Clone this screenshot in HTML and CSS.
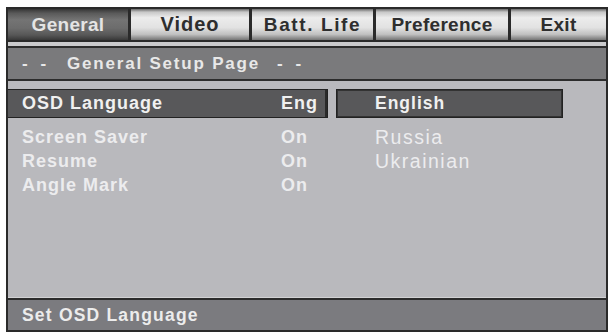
FILE: index.html
```html
<!DOCTYPE html>
<html>
<head>
<meta charset="utf-8">
<link rel="stylesheet" href="styles.css">
</head>
<body>
<div class="osd">
  <div class="tabs">
    <div class="tab tab-sel w-general">General</div>
    <div class="tab w-video">Video</div>
    <div class="tab w-batt">Batt. Life</div>
    <div class="tab w-pref">Preference</div>
    <div class="tab w-exit">Exit</div>
  </div>
  <div class="strip"></div>
  <div class="header"><span class="dash">- -</span><span class="title">General Setup Page</span><span class="dash">- -</span></div>
  <div class="main">
    <div class="col-left">
      <div class="row row-sel"><span class="label">OSD Language</span><span class="val">Eng</span></div>
      <div class="row row-first"><span class="label">Screen Saver</span><span class="val">On</span></div>
      <div class="row"><span class="label">Resume</span><span class="val">On</span></div>
      <div class="row"><span class="label">Angle Mark</span><span class="val">On</span></div>
    </div>
    <div class="col-right">
      <div class="opt opt-sel">English</div>
      <div class="opt opt-first">Russia</div>
      <div class="opt">Ukrainian</div>
    </div>
  </div>
  <div class="footer">Set OSD Language</div>
</div>
</body>
</html>
```

FILE: styles.css
```css
html, body {
  margin: 0;
  padding: 0;
  background: #ffffff;
}
body {
  font-family: "Liberation Sans", Arial, sans-serif;
  font-weight: bold;
}
.osd {
  margin: 7px 0 0 6px;
  width: 602px;
  height: 325px;
  box-sizing: border-box;
  border: 2px solid #2a2a2a;
  background: #b9b9bd;
  display: flex;
  flex-direction: column;
}
.tabs {
  display: flex;
  gap: 3px;
  height: 31px;
  background: #2a2a2a;
  padding-bottom: 2px;
  flex: none;
}
.tab {
  height: 31px;
  display: flex;
  align-items: center;
  justify-content: center;
  font-size: 19px;
  color: #2e2e2e;
  background: linear-gradient(to bottom, #6a6a6a 0, #c8c8c8 10%, #ececec 28%, #e2e2e2 60%, #c0c0c0 82%, #747474 100%);
  letter-spacing: 0.3px;
}
.tab-sel {
  color: #e4e4e4;
  background: linear-gradient(to bottom, #363636 0, #5a5a5a 14%, #747474 35%, #6c6c6c 62%, #575757 84%, #383838 100%);
}
.w-general { width: 120px; }
.w-video { width: 118px; font-size: 20px; letter-spacing: 1px; }
.w-batt { width: 121px; letter-spacing: 1.6px; }
.w-pref { width: 132px; }
.w-exit { width: 95px; }
.strip {
  height: 4px;
  background: #cbcbcd;
  flex: none;
}
.header {
  flex: none;
  height: 31px;
  border-top: 2px solid #2c2c2c;
  border-bottom: 2px solid #2c2c2c;
  background: #7a7a7c;
  color: #e8e8e8;
  font-size: 17px;
  letter-spacing: 1.8px;
  display: flex;
  align-items: center;
  padding-left: 14px;
  gap: 17px;
  white-space: pre;
}
.header .dash {
  letter-spacing: 4px;
}
.main {
  flex: 1;
  display: flex;
  gap: 8px;
  padding-top: 8px;
  border-bottom: 1px solid #d2d2d4;
}
.col-left {
  width: 320px;
  display: flex;
  flex-direction: column;
}
.col-right {
  width: 227px;
  display: flex;
  flex-direction: column;
}
.row {
  height: 24px;
  display: flex;
  align-items: center;
  padding-left: 14px;
  font-size: 18px;
  letter-spacing: 1px;
  color: #ececee;
}
.row .label {
  width: 259px;
}
.row-sel {
  height: 27px;
  border: 1px solid #222;
  border-left: none;
  background: #58585a;
  color: #f0f0f0;
  padding-left: 14px;
  box-shadow: inset -2px 0 0 #2a2a2a;
}
.row-first {
  margin-top: 7px;
}
.opt {
  height: 24px;
  display: flex;
  align-items: center;
  padding-left: 39px;
  font-weight: normal;
  font-size: 19.5px;
  letter-spacing: 1.5px;
  color: #ececee;
}
.opt-sel {
  height: 27px;
  border: 1px solid #222;
  box-shadow: inset 0 0 0 1px #333;
  background: #58585a;
  font-weight: bold;
  font-size: 17.5px;
  letter-spacing: 1px;
  color: #f0f0f0;
  padding-left: 38px;
}
.opt-first {
  margin-top: 7px;
}
.footer {
  flex: none;
  height: 30px;
  border-top: 2px solid #2c2c2c;
  background: #7b7b7f;
  color: #ececec;
  font-size: 17.5px;
  letter-spacing: 1.2px;
  display: flex;
  align-items: center;
  padding-left: 14px;
}
```
